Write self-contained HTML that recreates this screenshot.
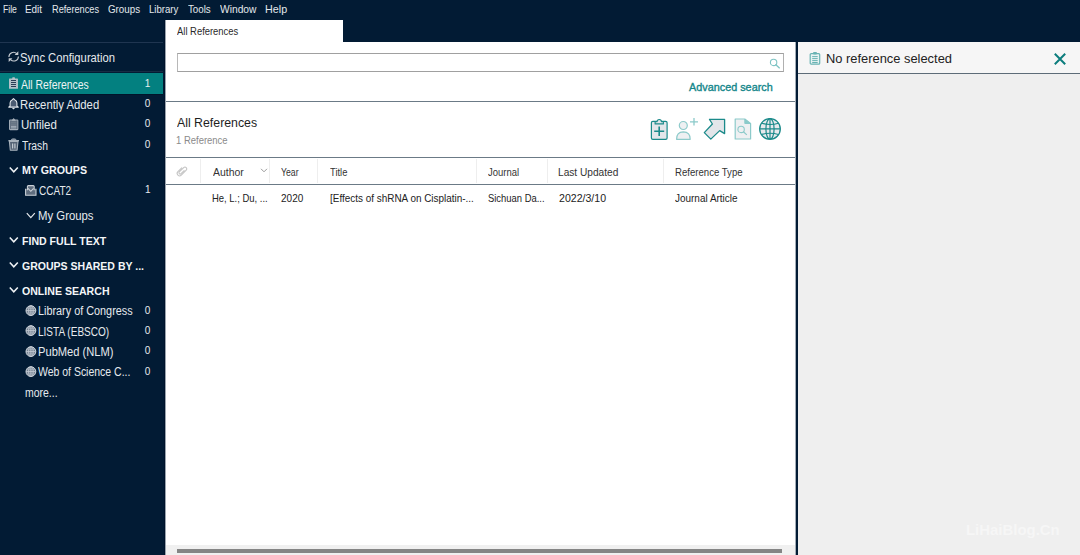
<!DOCTYPE html>
<html><head><meta charset="utf-8">
<style>
*{margin:0;padding:0;box-sizing:border-box}
html,body{width:1080px;height:555px;overflow:hidden;background:#021b34;font-family:"Liberation Sans",sans-serif}
.a{position:absolute}
.t{position:absolute;white-space:nowrap;line-height:1.2;transform-origin:0 0}
</style></head><body>
<div class="a" style="left:0;top:42px;width:163px;height:1px;background:#1f3550"></div>
<div class="a" style="left:0;top:73px;width:163px;height:21px;background:#038080"></div>
<div class="a" style="left:166px;top:20px;width:177px;height:23px;background:#fff"></div>
<div class="a" style="left:166px;top:42px;width:630px;height:513px;background:#fff"></div>
<div class="a" style="left:177px;top:53px;width:607px;height:19px;border:1px solid #a0a0a0;border-left-color:#b8b8b8;border-right-color:#b0b0b0;background:#fff"></div>
<div class="a" style="left:166px;top:101px;width:630px;height:1px;background:#6b7a86"></div>
<div class="a" style="left:166px;top:157px;width:630px;height:1px;background:#6b7a86"></div>
<div class="a" style="left:166px;top:184px;width:630px;height:1px;background:#6b7a86"></div>
<div class="a" style="left:166px;top:545px;width:630px;height:10px;background:#f0f0f0"></div>
<div class="a" style="left:177px;top:549px;width:605px;height:4px;background:#858585"></div>
<div class="a" style="left:798px;top:42px;width:282px;height:513px;background:#efefef"></div>
<div class="a" style="left:798px;top:42px;width:282px;height:31px;background:#f6f6f6"></div>
<div class="a" style="left:798px;top:73px;width:282px;height:1px;background:#5d6c78"></div>

<!-- sidebar icons -->
<svg class="a" style="left:8px;top:51px" width="12" height="12" viewBox="0 0 12 12" fill="none" stroke="#c6ccd2" stroke-width="1.1">
 <path d="M0.9 5.9 A4.6 4.6 0 0 1 8.7 2.6"/><path d="M10.3 0.3 V4 H6.6 Z" fill="#c6ccd2" stroke="none"/>
 <path d="M10.4 5.4 A4.6 4.6 0 0 1 2.6 8.7"/><path d="M0.7 11 V7.3 H4.4 Z" fill="#c6ccd2" stroke="none"/>
</svg>
<svg class="a" style="left:9px;top:77px" width="10" height="13" viewBox="0 0 10 13">
 <rect x="0" y="1.6" width="9" height="10.2" rx="0.6" fill="#b4c0c8"/>
 <rect x="3.2" y="0.3" width="2.8" height="2.2" rx="0.8" fill="#b4c0c8"/>
 <path d="M2 3.5H7M2 5.5H7M2 7.5H7M2 9.5H7" stroke="#2a3d55" stroke-width="1.1"/>
</svg>
<svg class="a" style="left:8px;top:98px" width="11" height="12" viewBox="0 0 11 12">
 <path d="M5.5 0.6 L6.9 1.9 Q8.9 2.6 8.9 5 L8.9 8 L10.3 9.1 L0.7 9.1 L2.1 8 L2.1 5 Q2.1 2.6 4.1 1.9 Z" fill="#4c5c72" stroke="#e1e5e9" stroke-width="1.1" stroke-linejoin="round"/>
 <path d="M3.9 10 L7.1 10 L5.5 11.6 Z" fill="#e1e5e9"/>
</svg>
<svg class="a" style="left:9px;top:118px" width="10" height="13" viewBox="0 0 10 13">
 <rect x="0.55" y="1.9" width="8.3" height="9.7" rx="0.6" fill="#5e6c7d" stroke="#a3adb8" stroke-width="1.05"/>
 <path d="M3 2.4 L4.7 0.5 L6.4 2.4 Z" fill="#a3adb8" stroke="#a3adb8" stroke-width="0.8" stroke-linejoin="round"/>
 <path d="M2 4.2H7.4M2 6.1H7.4" stroke="#7b8794" stroke-width="0.9"/>
 <path d="M2 8.3H7.4M2 9.9H7.4" stroke="#b5bec7" stroke-width="0.9"/>
</svg>
<svg class="a" style="left:8px;top:138px" width="12" height="13" viewBox="0 0 12 13">
 <path d="M1.4 3.4 L2.3 12.2 H9.1 L10 3.4 Z" fill="#566476" stroke="#a7b1bb" stroke-width="1.1" stroke-linejoin="round"/>
 <path d="M3.3 2.4 Q3.3 0.9 4.7 0.9 H6.7 Q8.1 0.9 8.1 2.4" fill="#7d8996" stroke="#a7b1bb" stroke-width="0.9"/>
 <path d="M0.4 2.7 H11" stroke="#a7b1bb" stroke-width="1.4"/>
 <path d="M4.6 5.4 V10.6 M6.9 5.4 V10.6" stroke="#c2c9d0" stroke-width="1.2"/>
</svg>
<svg class="a" style="left:9px;top:166px" width="10" height="8" viewBox="0 0 10 8"><path d="M0.8 1.4 L4.8 5.8 L8.8 1.4" fill="none" stroke="#eef1f4" stroke-width="1.55"/></svg>
<svg class="a" style="left:26px;top:212px" width="10" height="8" viewBox="0 0 10 8"><path d="M0.8 1.2 L4.8 5.6 L8.8 1.2" fill="none" stroke="#e6eaee" stroke-width="1.2"/></svg>
<svg class="a" style="left:9px;top:236px" width="10" height="8" viewBox="0 0 10 8"><path d="M0.8 1.4 L4.8 5.8 L8.8 1.4" fill="none" stroke="#eef1f4" stroke-width="1.55"/></svg>
<svg class="a" style="left:9px;top:261px" width="10" height="8" viewBox="0 0 10 8"><path d="M0.8 1.4 L4.8 5.8 L8.8 1.4" fill="none" stroke="#eef1f4" stroke-width="1.55"/></svg>
<svg class="a" style="left:9px;top:286px" width="10" height="8" viewBox="0 0 10 8"><path d="M0.8 1.4 L4.8 5.8 L8.8 1.4" fill="none" stroke="#eef1f4" stroke-width="1.55"/></svg>
<svg class="a" style="left:24.5px;top:184.5px" width="12" height="11" viewBox="0 0 12 11">
 <path d="M0.6 3.8 V10.2 H11 V3.8" fill="#5f6d7e" stroke="#cdd3d9" stroke-width="1.05"/>
 <path d="M2.4 5.2 V1.6 Q2.4 0.6 3.4 0.6 H8.2 Q9.2 0.6 9.2 1.6 V5.2" fill="#5f6d7e" stroke="#cdd3d9" stroke-width="1.05"/>
 <path d="M3 3.4 L5.8 6.3 L8.6 3.4" fill="none" stroke="#cdd3d9" stroke-width="1.05"/>
</svg>
<svg class="a" style="left:24.5px;top:304.5px" width="12" height="12" viewBox="0 0 12 12">
 <circle cx="5.9" cy="5.6" r="4.9" fill="#6f7d8d" stroke="#d3d9df" stroke-width="1"/>
 <ellipse cx="5.9" cy="5.6" rx="2.3" ry="4.9" fill="none" stroke="#c4cbd2" stroke-width="0.9"/>
 <path d="M5.9 0.8 V10.4 M1 5.6 H10.8" stroke="#c4cbd2" stroke-width="0.9"/>
 <path d="M1.7 3.3 H10.1 M1.7 7.9 H10.1" stroke="#b3bcc5" stroke-width="0.7"/>
</svg><svg class="a" style="left:24.5px;top:325px" width="12" height="12" viewBox="0 0 12 12">
 <circle cx="5.9" cy="5.6" r="4.9" fill="#6f7d8d" stroke="#d3d9df" stroke-width="1"/>
 <ellipse cx="5.9" cy="5.6" rx="2.3" ry="4.9" fill="none" stroke="#c4cbd2" stroke-width="0.9"/>
 <path d="M5.9 0.8 V10.4 M1 5.6 H10.8" stroke="#c4cbd2" stroke-width="0.9"/>
 <path d="M1.7 3.3 H10.1 M1.7 7.9 H10.1" stroke="#b3bcc5" stroke-width="0.7"/>
</svg><svg class="a" style="left:24.5px;top:345.5px" width="12" height="12" viewBox="0 0 12 12">
 <circle cx="5.9" cy="5.6" r="4.9" fill="#6f7d8d" stroke="#d3d9df" stroke-width="1"/>
 <ellipse cx="5.9" cy="5.6" rx="2.3" ry="4.9" fill="none" stroke="#c4cbd2" stroke-width="0.9"/>
 <path d="M5.9 0.8 V10.4 M1 5.6 H10.8" stroke="#c4cbd2" stroke-width="0.9"/>
 <path d="M1.7 3.3 H10.1 M1.7 7.9 H10.1" stroke="#b3bcc5" stroke-width="0.7"/>
</svg><svg class="a" style="left:24.5px;top:366px" width="12" height="12" viewBox="0 0 12 12">
 <circle cx="5.9" cy="5.6" r="4.9" fill="#6f7d8d" stroke="#d3d9df" stroke-width="1"/>
 <ellipse cx="5.9" cy="5.6" rx="2.3" ry="4.9" fill="none" stroke="#c4cbd2" stroke-width="0.9"/>
 <path d="M5.9 0.8 V10.4 M1 5.6 H10.8" stroke="#c4cbd2" stroke-width="0.9"/>
 <path d="M1.7 3.3 H10.1 M1.7 7.9 H10.1" stroke="#b3bcc5" stroke-width="0.7"/>
</svg>
<!-- main icons -->
<div class="a" style="left:0;top:71px;width:163px;height:1px;background:#172c44"></div><div class="a" style="left:0;top:94px;width:163px;height:1px;background:#00142a"></div>
<svg class="a" style="left:175px;top:164px" width="14" height="14" viewBox="0 0 14 14">
 <path transform="rotate(45 7 7)" d="M4.6 5 V10.4 A2.4 2.4 0 0 0 9.4 10.4 V3.4 A1.8 1.8 0 0 0 5.8 3.4 V9.6 A1.2 1.2 0 0 0 8.2 9.6 V5.2" fill="none" stroke="#c4c4c4" stroke-width="1.05" stroke-linecap="round"/>
</svg>
<svg class="a" style="left:260px;top:168px" width="8" height="5" viewBox="0 0 8 5"><path d="M1 0.8 L4 3.8 L7 0.8" fill="none" stroke="#9a9a9a" stroke-width="1"/></svg>
<div class="a" style="left:200px;top:159px;width:1px;height:24px;background:#eeeeee"></div>
<div class="a" style="left:269px;top:159px;width:1px;height:24px;background:#eeeeee"></div>
<div class="a" style="left:317px;top:159px;width:1px;height:24px;background:#eeeeee"></div>
<div class="a" style="left:476px;top:159px;width:1px;height:24px;background:#eeeeee"></div>
<div class="a" style="left:547px;top:159px;width:1px;height:24px;background:#eeeeee"></div>
<div class="a" style="left:663px;top:159px;width:1px;height:24px;background:#eeeeee"></div>
<svg class="a" style="left:769px;top:58px" width="12" height="11" viewBox="0 0 12 11">
 <circle cx="4.6" cy="4.4" r="3.2" fill="none" stroke="#7fc4c4" stroke-width="1.1"/>
 <path d="M6.9 6.7 L10.4 9.9" stroke="#7fc4c4" stroke-width="1.3" stroke-linecap="round"/>
</svg>
<!-- toolbar -->
<svg class="a" style="left:650px;top:117px" width="19" height="24" viewBox="0 0 19 24">
 <rect x="1.4" y="4.3" width="15.7" height="18.1" rx="1.4" fill="#e3e6ea" stroke="#1b8a8a" stroke-width="1.2"/>
 <path d="M5.1 6.9 V4.6 H7.1 A2.15 2.15 0 0 1 11.4 4.6 H13.4 V6.9 Z" fill="#e3e6ea" stroke="#1b8a8a" stroke-width="1.1" stroke-linejoin="round"/>
 <path d="M4.2 14.3 H14.2 M9.2 9.5 V19" stroke="#1b8a8a" stroke-width="1.6"/>
</svg>
<svg class="a" style="left:675px;top:117px" width="25" height="24" viewBox="0 0 25 24">
 <circle cx="8.3" cy="8.5" r="4" fill="#eef0f2" stroke="#8ccaca" stroke-width="1.2"/>
 <path d="M1.6 22.3 Q1.4 15 8.3 14.9 Q15.4 15 15.2 22.3 Z" fill="#eef0f2" stroke="#8ccaca" stroke-width="1.2" stroke-linejoin="round"/>
 <path d="M15 4.8 H23 M19 1 V8.6" stroke="#8ccaca" stroke-width="1.3"/>
</svg>
<svg class="a" style="left:703px;top:118px" width="23" height="23" viewBox="0 0 23 23">
 <path d="M6.5 1.4 L21.6 1.4 L21.6 15.6 L16.7 12.6 L7.8 21.1 L1.3 14.6 L9.4 6 Z" fill="#e3e6ea" stroke="#1b8a8a" stroke-width="1.3" stroke-linejoin="round"/>
</svg>
<svg class="a" style="left:734px;top:118px" width="18" height="22" viewBox="0 0 18 22">
 <path d="M1.2 1 H10.8 L16.6 5.5 V21 H1.2 Z" fill="#eff0f2" stroke="#8ccaca" stroke-width="1.2" stroke-linejoin="round"/>
 <path d="M10.8 1 V5.5 H16.6" fill="#8ccaca" stroke="#8ccaca" stroke-width="1"/>
 <circle cx="7.1" cy="11.4" r="3.2" fill="none" stroke="#8ccaca" stroke-width="1.1"/>
 <path d="M9.4 13.8 L12.8 16.9" stroke="#8ccaca" stroke-width="1.2"/>
</svg>
<svg class="a" style="left:758px;top:117.4px" width="24" height="24" viewBox="0 0 24 24">
 <circle cx="12" cy="11.9" r="10.3" fill="#e8e9ed" stroke="#1b8a8a" stroke-width="1.3"/>
 <ellipse cx="12" cy="11.9" rx="4.1" ry="10.3" fill="none" stroke="#1b8a8a" stroke-width="1.2"/>
 <path d="M12 1.6 V22.2 M1.7 11.9 H22.3" stroke="#1b8a8a" stroke-width="1.2"/>
 <path d="M3.5 6.3 Q12 8.8 20.5 6.3 M3.5 17.5 Q12 15 20.5 17.5" fill="none" stroke="#1b8a8a" stroke-width="1.1"/>
</svg>
<!-- right panel -->
<svg class="a" style="left:809px;top:51px" width="12" height="14" viewBox="0 0 12 14">
 <rect x="1.2" y="2.6" width="9.5" height="10.6" rx="1" fill="#e8f3f3" stroke="#69b3b3" stroke-width="1.2"/>
 <rect x="4" y="1" width="4" height="2.6" rx="1" fill="#69b3b3"/>
 <path d="M3.2 5.6 H8.7 M3.2 7.6 H8.7 M3.2 9.6 H8.7 M3.2 11.5 H8.7" stroke="#69b3b3" stroke-width="1"/>
</svg>
<svg class="a" style="left:1053px;top:52px" width="14" height="14" viewBox="0 0 14 14">
 <path d="M1.8 1.8 L12.2 12.2 M12.2 1.8 L1.8 12.2" stroke="#0c7d7d" stroke-width="2"/>
</svg>
<div class="a" style="left:966px;top:521px;font-size:15px;line-height:17px;color:#f6f6f6;font-weight:bold;transform:scaleX(0.995);transform-origin:0 0">LiHaiBlog.Cn</div>
<div class="a" style="left:164px;top:20px;width:1px;height:535px;background:#00132b"></div>
<div class="a" style="left:165px;top:20px;width:1px;height:535px;background:#9aa4ae"></div>
<div class="a" style="left:795px;top:42px;width:1px;height:513px;background:#a3adb7"></div>
<div class="t" id="m1" style="left:3.11px;top:3.20px;font-size:11px;color:#e4e8ec;transform:scaleX(0.7852);">File</div>
<div class="t" id="m2" style="left:25.09px;top:3.20px;font-size:11px;color:#e4e8ec;transform:scaleX(0.9009);">Edit</div>
<div class="t" id="m3" style="left:51.76px;top:3.20px;font-size:11px;color:#e4e8ec;transform:scaleX(0.8358);">References</div>
<div class="t" id="m4" style="left:108.00px;top:3.20px;font-size:11px;color:#e4e8ec;transform:scaleX(0.8889);">Groups</div>
<div class="t" id="m5" style="left:149.49px;top:3.20px;font-size:11px;color:#e4e8ec;transform:scaleX(0.8732);">Library</div>
<div class="t" id="m6" style="left:188.00px;top:3.20px;font-size:11px;color:#e4e8ec;transform:scaleX(0.8846);">Tools</div>
<div class="t" id="m7" style="left:220.16px;top:3.20px;font-size:11px;color:#e4e8ec;transform:scaleX(0.9325);">Window</div>
<div class="t" id="m8" style="left:265.23px;top:3.20px;font-size:11px;color:#e4e8ec;transform:scaleX(0.9790);">Help</div>
<div class="t" id="s1" style="left:20.32px;top:50.80px;font-size:12px;color:#e6eaee;transform:scaleX(0.9370);">Sync Configuration</div>
<div class="t" id="s2" style="left:21.24px;top:77.50px;font-size:12px;color:#eef3f3;transform:scaleX(0.8680);">All References</div>
<div class="t" id="c2" style="left:144.71px;top:78.00px;font-size:10px;color:#e6f0f0;">1</div>
<div class="t" id="s3" style="left:20.32px;top:97.70px;font-size:12px;color:#e6eaee;transform:scaleX(0.9422);">Recently Added</div>
<div class="t" id="c3" style="left:144.71px;top:98.00px;font-size:10px;color:#e6eaee;">0</div>
<div class="t" id="s4" style="left:20.92px;top:117.80px;font-size:12px;color:#e6eaee;transform:scaleX(0.9585);">Unfiled</div>
<div class="t" id="c4" style="left:144.71px;top:118.10px;font-size:10px;color:#e6eaee;">0</div>
<div class="t" id="s5" style="left:21.86px;top:138.50px;font-size:12px;color:#e6eaee;transform:scaleX(0.8591);">Trash</div>
<div class="t" id="c5" style="left:144.71px;top:138.80px;font-size:10px;color:#e6eaee;">0</div>
<div class="t" id="h1" style="left:21.72px;top:164.20px;font-size:11px;color:#f4f6f8;font-weight:700;transform:scaleX(0.9701);">MY GROUPS</div>
<div class="t" id="s6" style="left:38.61px;top:183.80px;font-size:12px;color:#e6eaee;transform:scaleX(0.8363);">CCAT2</div>
<div class="t" id="c6" style="left:145.00px;top:184.10px;font-size:10px;color:#e6eaee;">1</div>
<div class="t" id="s7" style="left:37.93px;top:208.70px;font-size:12px;color:#e6eaee;transform:scaleX(0.9466);">My Groups</div>
<div class="t" id="h2" style="left:21.72px;top:234.70px;font-size:11px;color:#f4f6f8;font-weight:700;transform:scaleX(0.9603);">FIND FULL TEXT</div>
<div class="t" id="h3" style="left:21.72px;top:259.80px;font-size:11px;color:#f4f6f8;font-weight:700;transform:scaleX(0.9567);">GROUPS SHARED BY ...</div>
<div class="t" id="h4" style="left:21.72px;top:284.70px;font-size:11px;color:#f4f6f8;font-weight:700;transform:scaleX(0.9612);">ONLINE SEARCH</div>
<div class="t" id="s8" style="left:37.94px;top:304.20px;font-size:12px;color:#e6eaee;transform:scaleX(0.9038);">Library of Congress</div>
<div class="t" id="c8" style="left:144.71px;top:304.50px;font-size:10px;color:#e6eaee;">0</div>
<div class="t" id="s9" style="left:37.62px;top:324.60px;font-size:12px;color:#e6eaee;transform:scaleX(0.8358);">LISTA (EBSCO)</div>
<div class="t" id="c9" style="left:144.71px;top:325.00px;font-size:10px;color:#e6eaee;">0</div>
<div class="t" id="s10" style="left:37.59px;top:345.00px;font-size:12px;color:#e6eaee;transform:scaleX(0.9286);">PubMed (NLM)</div>
<div class="t" id="c10" style="left:144.71px;top:345.30px;font-size:10px;color:#e6eaee;">0</div>
<div class="t" id="s11" style="left:38.47px;top:365.30px;font-size:12px;color:#e6eaee;transform:scaleX(0.8727);">Web of Science C...</div>
<div class="t" id="c11" style="left:144.71px;top:365.60px;font-size:10px;color:#e6eaee;">0</div>
<div class="t" id="s12" style="left:24.86px;top:385.60px;font-size:12px;color:#e6eaee;transform:scaleX(0.8723);">more...</div>
<div class="t" id="t1" style="left:177.00px;top:25.00px;font-size:10.5px;color:#2a2a2a;transform:scaleX(0.8971);">All References</div>
<div class="t" id="adv" style="left:688.63px;top:80.90px;font-size:11px;color:#13868a;-webkit-text-stroke:0.35px #13868a;transform:scaleX(0.9847);">Advanced search</div>
<div class="t" id="hd" style="left:177.00px;top:114.80px;font-size:13px;color:#1e1e1e;transform:scaleX(0.9477);">All References</div>
<div class="t" id="sub" style="left:176.25px;top:133.70px;font-size:10.5px;color:#8a8a8a;transform:scaleX(0.9019);">1 Reference</div>
<div class="t" id="th1" style="left:212.71px;top:165.50px;font-size:10.5px;color:#333333;transform:scaleX(0.9938);">Author</div>
<div class="t" id="th2" style="left:281.00px;top:165.50px;font-size:10.5px;color:#333333;transform:scaleX(0.8289);">Year</div>
<div class="t" id="th3" style="left:330.00px;top:165.50px;font-size:10.5px;color:#333333;transform:scaleX(0.8947);">Title</div>
<div class="t" id="th4" style="left:488.00px;top:165.50px;font-size:10.5px;color:#333333;transform:scaleX(0.9005);">Journal</div>
<div class="t" id="th5" style="left:557.92px;top:165.50px;font-size:10.5px;color:#333333;transform:scaleX(0.9665);">Last Updated</div>
<div class="t" id="th6" style="left:674.50px;top:165.50px;font-size:10.5px;color:#333333;transform:scaleX(0.9139);">Reference Type</div>
<div class="t" id="td1" style="left:211.94px;top:192.00px;font-size:10.5px;color:#222222;transform:scaleX(0.9004);">He, L.; Du, ...</div>
<div class="t" id="td2" style="left:281.00px;top:192.00px;font-size:10.5px;color:#222222;transform:scaleX(0.9529);">2020</div>
<div class="t" id="td3" style="left:329.72px;top:192.00px;font-size:10.5px;color:#222222;transform:scaleX(0.9457);">[Effects of shRNA on Cisplatin-...</div>
<div class="t" id="td4" style="left:488.00px;top:192.00px;font-size:10.5px;color:#222222;transform:scaleX(0.8969);">Sichuan Da...</div>
<div class="t" id="td5" style="left:558.70px;top:192.00px;font-size:10.5px;color:#222222;transform:scaleX(1.0069);">2022/3/10</div>
<div class="t" id="td6" style="left:675.26px;top:192.00px;font-size:10.5px;color:#222222;transform:scaleX(0.9485);">Journal Article</div>
<div class="t" id="nr" style="left:825.71px;top:50.80px;font-size:13px;color:#222222;transform:scaleX(0.9904);">No reference selected</div>
</body></html>
